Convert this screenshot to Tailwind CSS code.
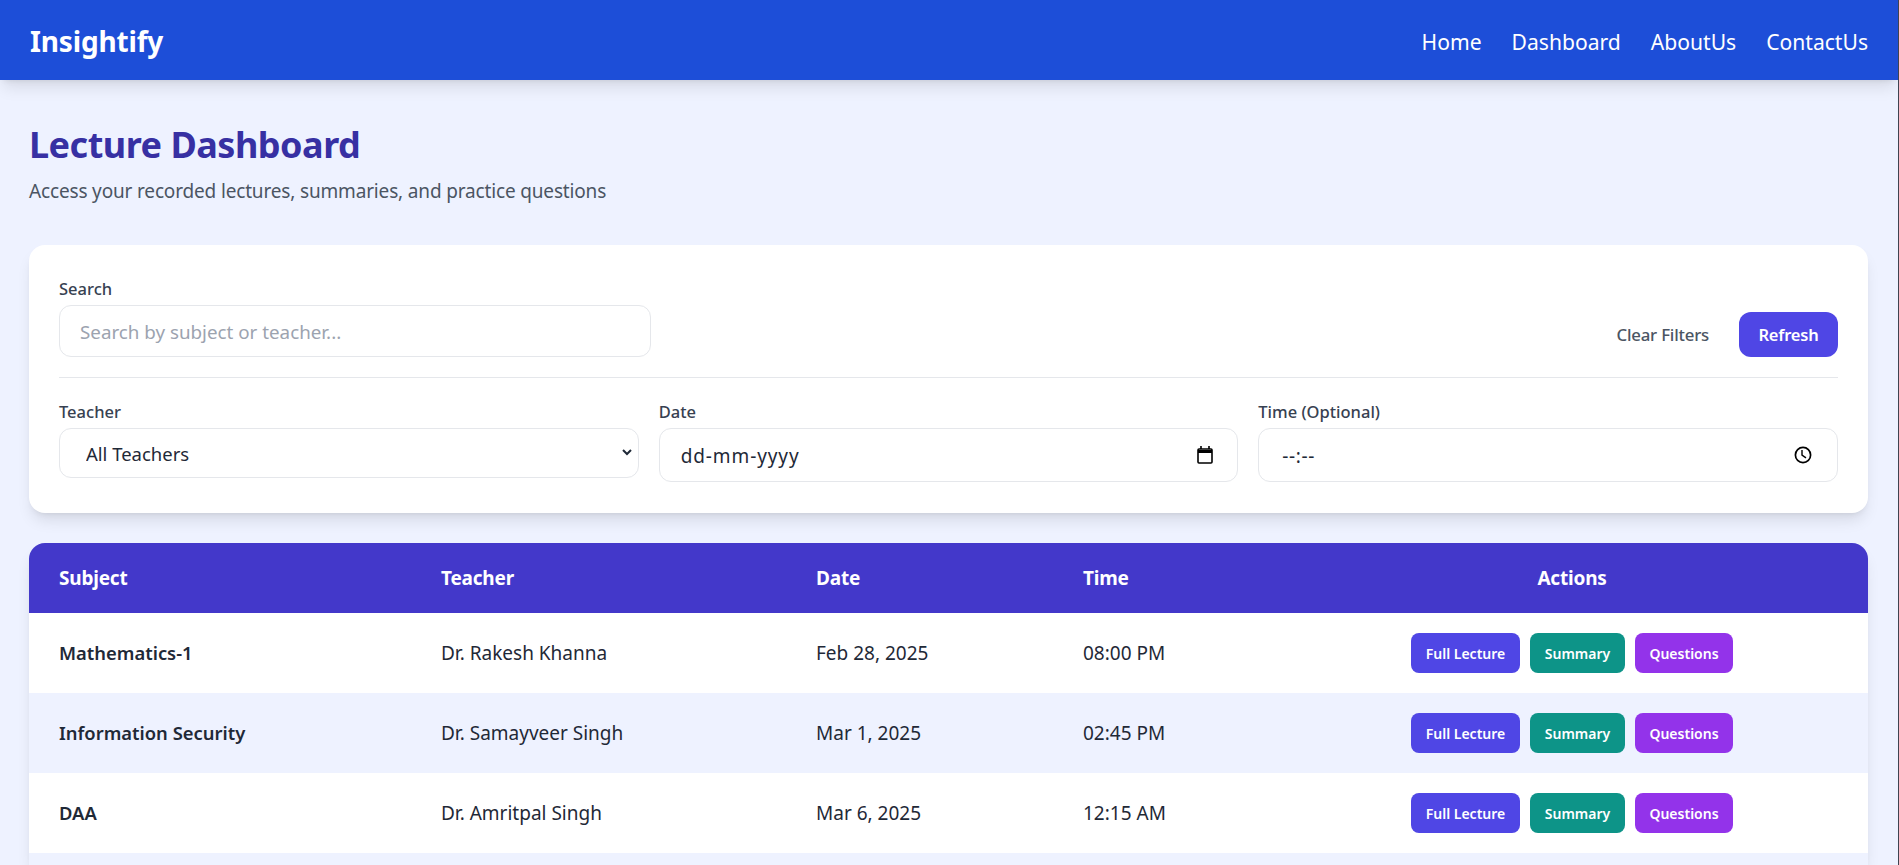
<!DOCTYPE html>
<html lang="en">
<head>
  <meta charset="UTF-8" />
  <meta name="viewport" content="width=device-width, initial-scale=1.0" />
  <title>Insightify</title>
  <script src="https://cdn.jsdelivr.net/npm/@tailwindcss/browser@4"></script>
</head>
<body class="bg-[#eef2ff] text-[#1f2937] font-['Noto_Sans',sans-serif] h-[865px] overflow-hidden border-r border-[#3f4450]">
  <nav class="relative z-10 h-20 bg-[#1d4ed8] shadow-lg flex items-center justify-between pl-[30px] pr-[30px] text-white">
    <a class="text-[28px] font-bold tracking-[-0.16px] pt-[2px]">Insightify</a>
    <div class="flex gap-[30px] text-[21.1px] pt-[4px]">
      <a>Home</a>
      <a>Dashboard</a>
      <a>AboutUs</a>
      <a>ContactUs</a>
    </div>
  </nav>

  <main class="pl-[29px] pr-[30px] pt-[40px]">
    <h1 class="text-[36px] leading-[50px] font-bold text-[#3730a3] tracking-[-0.5px]">Lecture Dashboard</h1>
    <p class="mt-[7px] text-[19px] leading-[28px] text-[#4b5563] tracking-[-0.16px]">Access your recorded lectures, summaries, and practice questions</p>

    <section class="mt-[40px] h-[268px] bg-white rounded-2xl shadow-lg px-[30px] pt-[34px]">
      <div class="flex items-end justify-between pb-[20px] border-b border-[#e5e7eb]">
        <div class="w-[592px]">
          <label class="block text-[16.5px] leading-[20px] font-medium text-[#374151] mb-[6px]">Search</label>
          <input type="text" placeholder="Search by subject or teacher..." class="w-full h-[52px] px-[20px] pt-[2px] text-[18.8px] rounded-xl border border-[#e5e7eb] placeholder:text-[#9ca3af]" />
        </div>
        <div class="flex items-center gap-[10px]">
          <button class="px-[20px] h-[45px] pt-[1px] text-[16.8px] font-medium text-[#4b5563] tracking-[-0.2px]">Clear Filters</button>
          <button class="w-[99px] h-[45px] pt-[1px] rounded-xl bg-[#4f46e5] text-white text-[16.5px] font-semibold tracking-[-0.2px]">Refresh</button>
        </div>
      </div>
      <div class="grid grid-cols-3 gap-[20px] items-start mt-[24px]">
        <div>
          <label class="block text-[16.5px] leading-[20px] font-medium text-[#374151] mb-[6px]">Teacher</label>
          <div class="relative">
            <select class="w-full h-[50px] pl-[26px] pr-[40px] pt-[2px] text-[18.5px] rounded-xl border border-[#e5e7eb] bg-white appearance-none">
              <option>All Teachers</option>
            </select>
            <svg class="absolute right-[7px] top-[19px] w-[10px] h-[10px] pointer-events-none" viewBox="0 0 10 10" fill="none" stroke="#1f2937" stroke-width="2"><path d="M1 3l4 4 4-4" /></svg>
          </div>
        </div>
        <div>
          <label class="block text-[16.5px] leading-[20px] font-medium text-[#374151] mb-[6px]">Date</label>
          <div class="flex items-center h-[54px] pl-[21px] pr-[24px] rounded-xl border border-[#e5e7eb]">
            <input type="text" placeholder="dd-mm-yyyy" class="flex-1 min-w-0 pt-[3px] text-[19px] tracking-[0.9px] placeholder:text-[#1f2937]" />
            <svg class="w-[16px] h-[18px]" viewBox="0 0 16 18" fill="none" stroke="#000" stroke-width="1.6"><rect x="1" y="3" width="14" height="14" rx="1" /><path d="M1 5.5h14" stroke-width="3" /><path d="M4 0v3M12 0v3" /></svg>
          </div>
        </div>
        <div>
          <label class="block text-[16.5px] leading-[20px] font-medium text-[#374151] mb-[6px]">Time (Optional)</label>
          <div class="flex items-center h-[54px] pl-[23px] pr-[25px] rounded-xl border border-[#e5e7eb]">
            <input type="text" placeholder="--:--" class="flex-1 min-w-0 pt-[3px] text-[19px] tracking-[0.6px] placeholder:text-[#1f2937]" />
            <svg class="w-[18px] h-[18px]" viewBox="0 0 18 18" fill="none" stroke="#000" stroke-width="1.7"><circle cx="9" cy="9" r="7.6" /><path d="M8 4v5.2l4 2.6" stroke-width="1.4" /></svg>
          </div>
        </div>
      </div>
    </section>

    <section class="mt-[30px] h-[322px] rounded-t-2xl overflow-hidden shadow-lg">
      <table class="w-full table-fixed text-left">
        <thead class="bg-[#4338ca] text-white text-[19px] tracking-[-0.2px]">
          <tr class="h-[70px]">
            <th class="w-[382px] pl-[30px] font-bold">Subject</th>
            <th class="w-[375px] pl-[30px] font-bold">Teacher</th>
            <th class="w-[267px] pl-[30px] font-bold">Date</th>
            <th class="w-[223px] pl-[30px] font-bold">Time</th>
            <th class="text-center font-bold">Actions</th>
          </tr>
        </thead>
        <tbody class="text-[19px]">
          <tr class="h-[80px] bg-white">
            <td class="pl-[30px] text-[18.4px] font-semibold">Mathematics-1</td>
            <td class="pl-[30px]">Dr. Rakesh Khanna</td>
            <td class="pl-[30px]">Feb 28, 2025</td>
            <td class="pl-[30px]">08:00 PM</td>
            <td>
              <div class="flex justify-center gap-[10px] text-white text-[14px] font-semibold">
                <button class="w-[109px] h-[40px] rounded-lg bg-[#4f46e5]">Full Lecture</button>
                <button class="w-[95px] h-[40px] rounded-lg bg-[#0d9488]">Summary</button>
                <button class="w-[98px] h-[40px] rounded-lg bg-[#9333ea]">Questions</button>
              </div>
            </td>
          </tr>
          <tr class="h-[80px] bg-[#eef2ff]">
            <td class="pl-[30px] text-[18.4px] font-semibold">Information Security</td>
            <td class="pl-[30px]">Dr. Samayveer Singh</td>
            <td class="pl-[30px]">Mar 1, 2025</td>
            <td class="pl-[30px]">02:45 PM</td>
            <td>
              <div class="flex justify-center gap-[10px] text-white text-[14px] font-semibold">
                <button class="w-[109px] h-[40px] rounded-lg bg-[#4f46e5]">Full Lecture</button>
                <button class="w-[95px] h-[40px] rounded-lg bg-[#0d9488]">Summary</button>
                <button class="w-[98px] h-[40px] rounded-lg bg-[#9333ea]">Questions</button>
              </div>
            </td>
          </tr>
          <tr class="h-[80px] bg-white">
            <td class="pl-[30px] text-[18.4px] font-semibold">DAA</td>
            <td class="pl-[30px]">Dr. Amritpal Singh</td>
            <td class="pl-[30px]">Mar 6, 2025</td>
            <td class="pl-[30px]">12:15 AM</td>
            <td>
              <div class="flex justify-center gap-[10px] text-white text-[14px] font-semibold">
                <button class="w-[109px] h-[40px] rounded-lg bg-[#4f46e5]">Full Lecture</button>
                <button class="w-[95px] h-[40px] rounded-lg bg-[#0d9488]">Summary</button>
                <button class="w-[98px] h-[40px] rounded-lg bg-[#9333ea]">Questions</button>
              </div>
            </td>
          </tr>
          <tr class="h-[80px] bg-[#eef2ff]"><td colspan="5"></td></tr>
        </tbody>
      </table>
    </section>
  </main>
</body>
</html>
